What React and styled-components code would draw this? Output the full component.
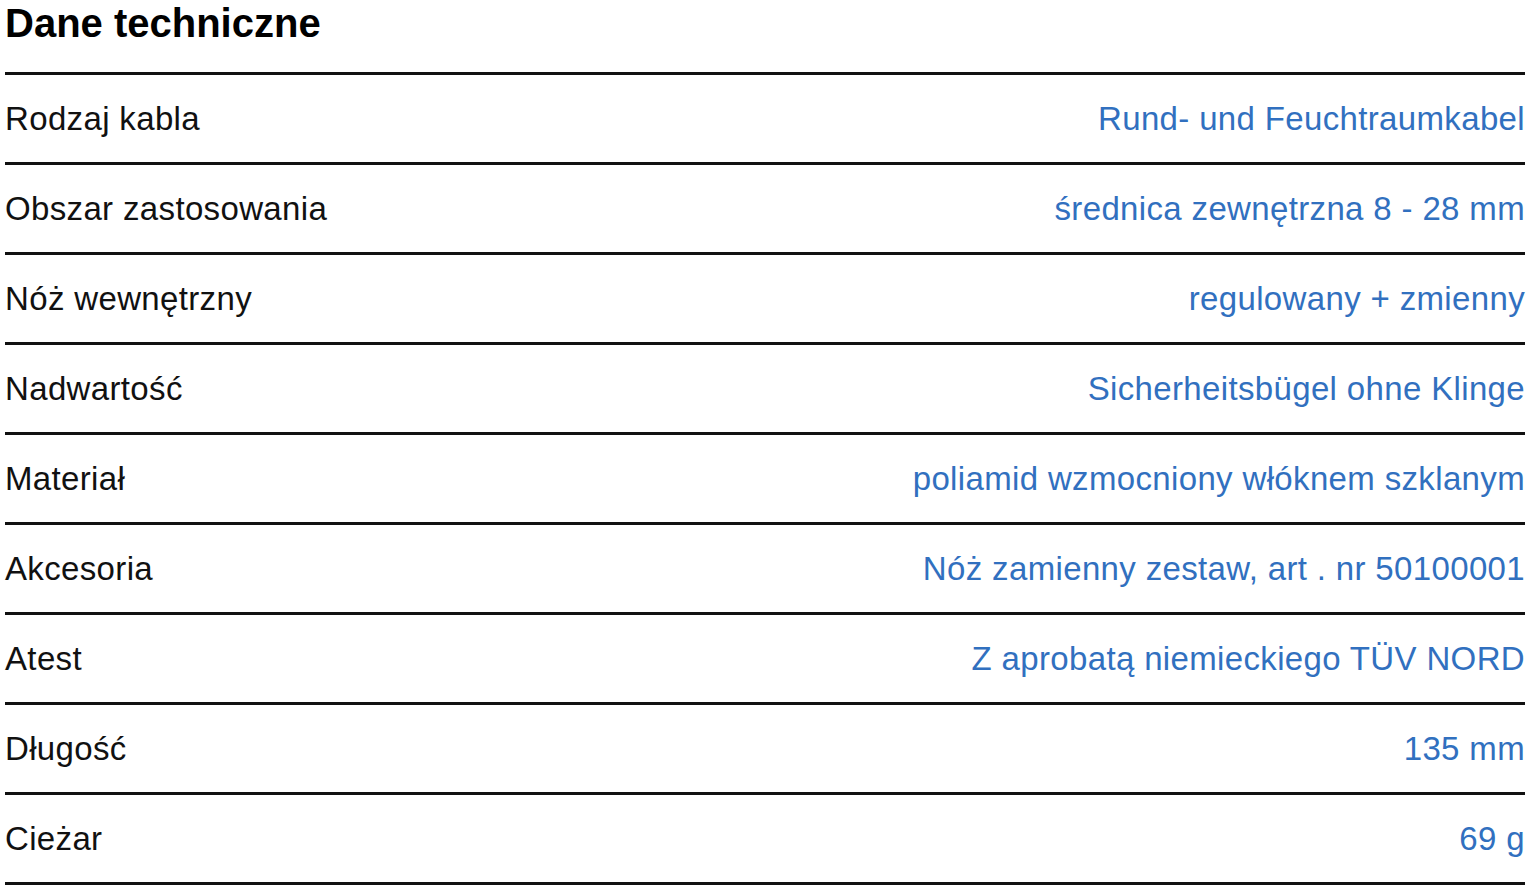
import React from 'react';
import styled, { createGlobalStyle } from 'styled-components';

const GlobalStyle = createGlobalStyle`
  body {
    margin: 0;
    background: #fff;
    font-family: 'Liberation Sans', Arial, sans-serif;
  }
`;

const Page = styled.div`
  width: 1520px;
  padding: 0 7px 0 5px;
`;

const Title = styled.h2`
  margin: 0;
  height: 72px;
  font-size: 40px;
  font-weight: 700;
  line-height: 46px;
  color: #000;
`;

const Specs = styled.div`
  display: grid;
  grid-template-columns: 1fr auto;
  border-bottom: 3px solid #111;
`;

const Cell = styled.div`
  display: flex;
  align-items: center;
  justify-content: ${(p) => (p.$value ? 'flex-end' : 'flex-start')};
  height: 87px;
  border-top: 3px solid #111;
  font-size: 33px;
  letter-spacing: 0.35px;
  color: ${(p) => (p.$value ? '#3170bf' : '#111')};
  white-space: nowrap;
  box-sizing: content-box;
`;

const rows = [
  ['Rodzaj kabla', 'Rund- und Feuchtraumkabel'],
  ['Obszar zastosowania', 'średnica zewnętrzna 8 - 28 mm'],
  ['Nóż wewnętrzny', 'regulowany + zmienny'],
  ['Nadwartość', 'Sicherheitsbügel ohne Klinge'],
  ['Materiał', 'poliamid wzmocniony włóknem szklanym'],
  ['Akcesoria', 'Nóż zamienny zestaw, art . nr 50100001'],
  ['Atest', 'Z aprobatą niemieckiego TÜV NORD'],
  ['Długość', '135 mm'],
  ['Cieżar', '69 g'],
];

export default function App() {
  return (
    <Page>
      <GlobalStyle />
      <Title>Dane techniczne</Title>
      <Specs>
        {rows.map(([label, value]) => (
          <React.Fragment key={label}>
            <Cell>{label}</Cell>
            <Cell $value>{value}</Cell>
          </React.Fragment>
        ))}
      </Specs>
    </Page>
  );
}
